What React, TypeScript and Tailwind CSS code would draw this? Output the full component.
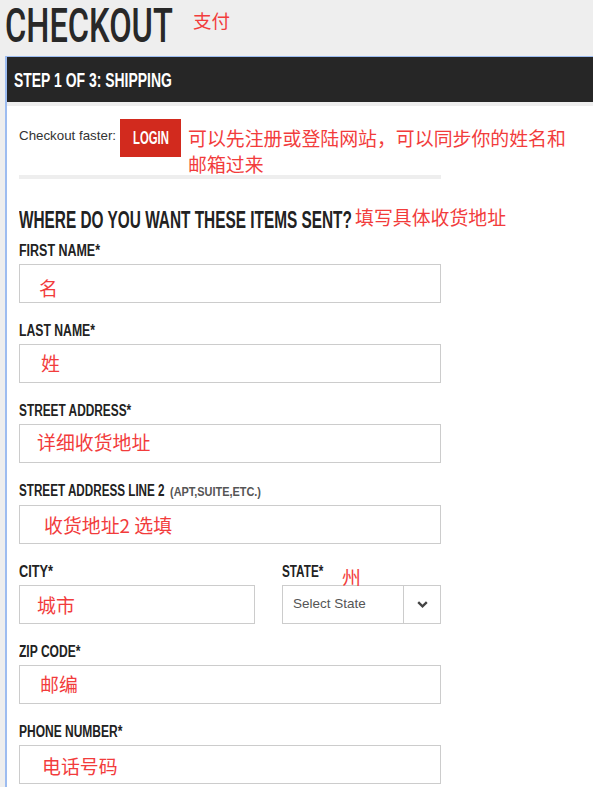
import React from "react";

const LAT = "font-['Liberation_Sans',Arial,sans-serif]";
const CJK = "font-['Noto_Sans_CJK_SC','Noto_Sans',sans-serif]";
const RED = "text-[#f23c3c]";

function Sq({ box, sx, children }: { box: string; sx: string; children: React.ReactNode }) {
  return (
    <span className={`inline-block whitespace-nowrap ${box}`}>
      <span className={`inline-block origin-left ${sx}`}>{children}</span>
    </span>
  );
}

function Label({ sx, children }: { sx: string; children: React.ReactNode }) {
  return (
    <div className={`${LAT} text-[16px] leading-[16px] font-bold text-[#222222]`}>
      <Sq box="" sx={sx}>
        {children}
      </Sq>
    </div>
  );
}

function Input({ note, pad }: { note: string; pad: string }) {
  return (
    <div className="mt-[5px] h-[39px] border border-[#cccccc] bg-white">
      <div className={`${CJK} ${RED} text-[18.9px] leading-[26px] whitespace-nowrap ${pad}`}>{note}</div>
    </div>
  );
}

export default function App() {
  return (
    <div className="min-h-screen bg-[#eeeeee]">
      {/* Title */}
      <div className="h-[56px] flex items-start pl-[5px]">
        <span className="font-['Roboto','Liberation_Sans',sans-serif] inline-block w-[168px] whitespace-nowrap pt-[1px] text-[49px] leading-[49px] font-medium text-[#282828]">
          <span className="inline-block origin-left scale-x-[0.665]">CHECKOUT</span>
        </span>
        <span className={`${CJK} ${RED} ml-[20px] mt-[11px] text-[18.5px] leading-none`}>支付</span>
      </div>

      {/* Panel */}
      <div className="ml-[5px] border-l-2 border-t border-[#9dbcf0] bg-white">
        <div className={`${LAT} h-[45px] bg-[#262626] pl-[7px] pt-[2px] text-[19.5px] leading-[43px] font-bold text-white`}>
          <Sq box="" sx="scale-x-[0.715]">STEP 1 OF 3: SHIPPING</Sq>
        </div>
        <div className="h-[4px] bg-[#eeeeee]" />

        <div className="pl-[12px] pt-[13px] pb-[24px]">
          {/* Login row */}
          <div className="h-[56px] flex items-start">
            <span className={`${LAT} mt-[9px] text-[13.33px] leading-[16px] text-[#333333] whitespace-nowrap`}>
              Checkout faster:
            </span>
            <button className={`${LAT} ml-[4px] w-[61px] h-[38px] shrink-0 bg-[#d22a1e] flex items-center justify-center text-[17.7px] font-bold text-white`}>
              <span className="inline-block scale-x-[0.64] whitespace-nowrap">LOGIN</span>
            </button>
            <div className={`${CJK} ${RED} ml-[7px] mt-[6px] w-[380px] text-[18.9px] leading-[26px]`}>
              可以先注册或登陆网站，可以同步你的姓名和邮箱过来
            </div>
          </div>
          <div className="w-[422px] h-[4px] bg-[#eeeeee]" />

          {/* Heading */}
          <div className="mt-[27px] flex items-start">
            <span className={`${LAT} text-[23.3px] leading-[28px] font-bold text-[#222222]`}>
              <Sq box="w-[336px]" sx="scale-x-[0.66]">WHERE DO YOU WANT THESE ITEMS SENT?</Sq>
            </span>
            <span className={`${CJK} ${RED} -mt-[2px] text-[18.9px] leading-[26px] whitespace-nowrap`}>填写具体收货地址</span>
          </div>

          {/* Fields */}
          <div className="mt-[9px] w-[422px] flex flex-col gap-[20px]">
            <div>
              <Label sx="scale-x-[0.779]">FIRST NAME*</Label>
              <Input note="名" pad="pl-[19px] pt-[10px]" />
            </div>
            <div>
              <Label sx="scale-x-[0.763]">LAST NAME*</Label>
              <Input note="姓" pad="pl-[21px] pt-[5px]" />
            </div>
            <div>
              <Label sx="scale-x-[0.741]">STREET ADDRESS*</Label>
              <Input note="详细收货地址" pad="pl-[17px] pt-[4px]" />
            </div>
            <div>
              <div className={`${LAT} flex items-baseline font-bold`}>
                <span className="text-[16px] leading-[16px] text-[#222222]">
                  <Sq box="w-[151px]" sx="scale-x-[0.73]">STREET ADDRESS LINE 2</Sq>
                </span>
                <span className="text-[13px] leading-[16px] text-[#555555]">
                  <Sq box="" sx="scale-x-[0.84]">(APT,SUITE,ETC.)</Sq>
                </span>
              </div>
              <Input note="收货地址2 选填" pad="pl-[24px] pt-[6px]" />
            </div>
            <div className="flex gap-[27px]">
              <div className="w-[236px]">
                <Label sx="scale-x-[0.797]">CITY*</Label>
                <Input note="城市" pad="pl-[17px] pt-[6px]" />
              </div>
              <div className="relative w-[159px]">
                <Label sx="scale-x-[0.733]">STATE*</Label>
                <span className={`${CJK} ${RED} absolute left-[60px] top-0 text-[18.9px] leading-[26px]`}>州</span>
                <div className="mt-[5px] h-[39px] border border-[#cccccc] bg-white flex">
                  <div className={`${LAT} flex-1 flex items-center pl-[10px] text-[13.5px] text-[#555555] whitespace-nowrap`}>
                    Select State
                  </div>
                  <div className="w-[37px] border-l border-[#cccccc] flex items-center justify-center">
                    <svg width="11" height="7" viewBox="0 0 11 7">
                      <polyline points="1.2,1.2 5.5,5.3 9.8,1.2" fill="none" stroke="#444444" strokeWidth="2.4" />
                    </svg>
                  </div>
                </div>
              </div>
            </div>
            <div>
              <Label sx="scale-x-[0.754]">ZIP CODE*</Label>
              <Input note="邮编" pad="pl-[20px] pt-[5px]" />
            </div>
            <div>
              <Label sx="scale-x-[0.75]">PHONE NUMBER*</Label>
              <Input note="电话号码" pad="pl-[22px] pt-[7px]" />
            </div>
          </div>
        </div>
      </div>
    </div>
  );
}
